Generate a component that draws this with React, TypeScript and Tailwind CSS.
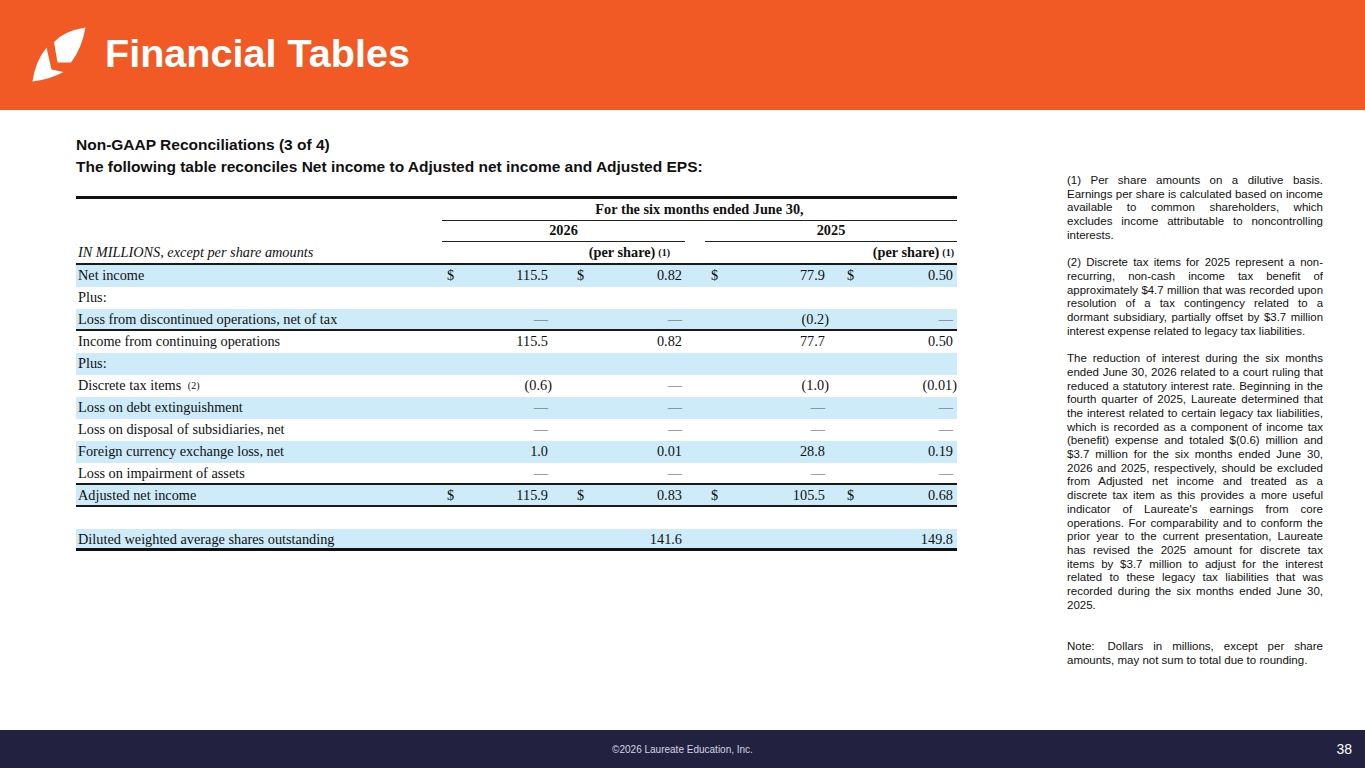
import React from "react";

const serif = { fontFamily: '"Liberation Serif", "Times New Roman", serif' };

type Row = {
  label: React.ReactNode;
  cells?: [React.ReactNode, React.ReactNode, React.ReactNode, React.ReactNode];
  dollars?: boolean;
  blue?: boolean;
  border?: "thin" | "thick" | "none";
};

const D = "—";

function Num({ v }: { v: React.ReactNode }) {
  if (typeof v === "string" && v.startsWith("(")) {
    return <span className="-mr-[4px]">{v}</span>;
  }
  if (v === D) {
    return <span className="text-[#555]">{v}</span>;
  }
  return <span>{v}</span>;
}

function DataRow({ r }: { r: Row }) {
  const bg = r.blue ? "bg-[#cdebf9]" : "bg-white";
  const bd =
    r.border === "thin"
      ? "border-b-2 border-[#1a1a1a]"
      : r.border === "thick"
      ? "border-b-[3px] border-[#111]"
      : "";
  const c = r.cells;
  return (
    <div className={`grid grid-cols-[366px_123px_120px_20px_130px_122px] h-[22px] items-center ${bg} ${bd}`}>
      <div className="pl-[2px] whitespace-nowrap">{r.label}</div>
      <div className="flex justify-between pl-[5px] pr-[17px]">
        <span>{r.dollars ? "$" : ""}</span>
        {c ? <Num v={c[0]} /> : <span />}
      </div>
      <div className="flex justify-between pl-[12px] pr-[3px]">
        <span>{r.dollars ? "$" : ""}</span>
        {c ? <Num v={c[1]} /> : <span />}
      </div>
      <div />
      <div className="flex justify-between pl-[6px] pr-[10px]">
        <span>{r.dollars ? "$" : ""}</span>
        {c ? <Num v={c[2]} /> : <span />}
      </div>
      <div className="flex justify-between pl-[12px] pr-[4px]">
        <span>{r.dollars ? "$" : ""}</span>
        {c ? <Num v={c[3]} /> : <span />}
      </div>
    </div>
  );
}

const rows: Row[] = [
  { label: "Net income", cells: ["115.5", "0.82", "77.9", "0.50"], dollars: true, blue: true },
  { label: "Plus:" },
  { label: "Loss from discontinued operations, net of tax", cells: [D, D, "(0.2)", D], blue: true, border: "thin" },
  { label: "Income from continuing operations", cells: ["115.5", "0.82", "77.7", "0.50"] },
  { label: "Plus:", blue: true },
  {
    label: (
      <span>
        Discrete tax items <sup className="text-[10px] ml-[3px] relative -top-[1px]">(2)</sup>
      </span>
    ),
    cells: ["(0.6)", D, "(1.0)", "(0.01)"],
  },
  { label: "Loss on debt extinguishment", cells: [D, D, D, D], blue: true },
  { label: "Loss on disposal of subsidiaries, net", cells: [D, D, D, D] },
  { label: "Foreign currency exchange loss, net", cells: ["1.0", "0.01", "28.8", "0.19"], blue: true },
  { label: "Loss on impairment of assets", cells: [D, D, D, D], border: "thin" },
  { label: "Adjusted net income", cells: ["115.9", "0.83", "105.5", "0.68"], dollars: true, blue: true, border: "thin" },
];

function Logo() {
  return (
    <svg width="60" height="60" viewBox="28 26 60 60" className="shrink-0">
      <path d="M54 43 L57.5 63.5 L71 63.5 Q82 49 85.5 28.5 Q64 32 54 43 Z" fill="#fff" />
      <path d="M46.5 48.5 L51.5 70.5 L63.5 73 Q50 80.5 32.5 82.5 Q35 63 46.5 48.5 Z" fill="#fff" />
    </svg>
  );
}

export default function App() {
  return (
    <div className="w-[1365px] h-[768px] flex flex-col bg-white overflow-hidden" style={{ fontFamily: '"Liberation Sans", Arial, sans-serif' }}>
      {/* Header */}
      <div className="h-[110px] bg-[#f15a24] flex items-center pl-[28px] shrink-0">
        <Logo />
        <h1 className="text-white font-bold text-[39.6px] leading-none ml-[17px] -mt-[2px]">Financial Tables</h1>
      </div>

      {/* Main */}
      <div className="flex-1 flex">
        {/* Left */}
        <div className="w-[881px] ml-[76px] pt-[26px]">
          <div className="text-[15.5px] font-bold leading-[18px] text-[#111]">Non-GAAP Reconciliations (3 of 4)</div>
          <div className="text-[15.5px] font-bold leading-[18px] mt-[4px] text-[#111]">
            The following table reconciles Net income to Adjusted net income and Adjusted EPS:
          </div>

          <div className="mt-[20px] text-[14.3px] text-[#111]" style={serif}>
            <div className="border-t-[3px] border-[#111]" />
            {/* header row 1 */}
            <div className="grid grid-cols-[366px_123px_120px_20px_130px_122px] h-[21px] items-center font-bold">
              <div />
              <div className="col-span-5 text-center border-b-[1.5px] border-[#222] h-full flex items-center justify-center">
                For the six months ended June 30,
              </div>
            </div>
            {/* header row 2 */}
            <div className="grid grid-cols-[366px_123px_120px_20px_130px_122px] h-[22px] items-center font-bold">
              <div />
              <div className="col-span-2 border-b-[1.5px] border-[#222] h-full flex items-center justify-center">2026</div>
              <div />
              <div className="col-span-2 border-b-[1.5px] border-[#222] h-full flex items-center justify-center">2025</div>
            </div>
            {/* header row 3 */}
            <div className="grid grid-cols-[366px_123px_120px_20px_130px_122px] h-[23px] items-center border-b-2 border-[#1a1a1a]">
              <div className="pl-[2px] italic">IN MILLIONS, except per share amounts</div>
              <div className="col-span-2 text-right pr-[15px] font-bold">
                (per share)<sup className="text-[10px] ml-[3px] relative -top-[1px]">(1)</sup>
              </div>
              <div />
              <div className="col-span-2 text-right pr-[3px] font-bold">
                (per share)<sup className="text-[10px] ml-[3px] relative -top-[1px]">(1)</sup>
              </div>
            </div>
            {rows.map((r, i) => (
              <DataRow key={i} r={r} />
            ))}
            <div className="h-[22px]" />
            <div className="grid grid-cols-[366px_123px_120px_20px_130px_122px] h-[22px] items-center bg-[#cdebf9] border-b-[3px] border-[#111]">
              <div className="pl-[2px]">Diluted weighted average shares outstanding</div>
              <div />
              <div className="text-right pr-[3px]">141.6</div>
              <div />
              <div />
              <div className="text-right pr-[4px]">149.8</div>
            </div>
          </div>
        </div>

        {/* Right notes */}
        <div className="w-[256px] ml-[110px] pt-[64px] text-[11.5px] leading-[13.7px] text-[#111] text-justify">
          <p>
            (1) Per share amounts on a dilutive basis. Earnings per share is calculated based on income available to common shareholders, which excludes income attributable to noncontrolling interests.
          </p>
          <p className="mt-[13.7px] text-[11.4px]">
            (2) Discrete tax items for 2025 represent a non-recurring, non-cash income tax benefit of approximately $4.7 million that was recorded upon resolution of a tax contingency related to a dormant subsidiary, partially offset by $3.7 million interest expense related to legacy tax liabilities.
          </p>
          <p className="mt-[13.7px]">
            The reduction of interest during the six months ended June 30, 2026 related to a court ruling that reduced a statutory interest rate. Beginning in the fourth quarter of 2025, Laureate determined that the interest related to certain legacy tax liabilities, which is recorded as a component of income tax (benefit) expense and totaled $(0.6) million and $3.7 million for the six months ended June 30, 2026 and 2025, respectively, should be excluded from Adjusted net income and treated as a discrete tax item as this provides a more useful indicator of Laureate's earnings from core operations. For comparability and to conform the prior year to the current presentation, Laureate has revised the 2025 amount for discrete tax items by $3.7 million to adjust for the interest related to these legacy tax liabilities that was recorded during the six months ended June 30, 2025.
          </p>
          <p className="mt-[27.4px]">
            <span className="mr-[3px]">Note:</span> Dollars in millions, except per share amounts, may not sum to total due to rounding.
          </p>
        </div>
      </div>

      {/* Footer */}
      <div className="h-[38px] bg-[#22213f] shrink-0 relative flex items-center justify-center">
        <span className="text-[10px] text-[#d4d4e0]">©2026 Laureate Education, Inc.</span>
        <span className="absolute right-[13px] top-1/2 -translate-y-1/2 text-[14px] text-white">38</span>
      </div>
    </div>
  );
}
